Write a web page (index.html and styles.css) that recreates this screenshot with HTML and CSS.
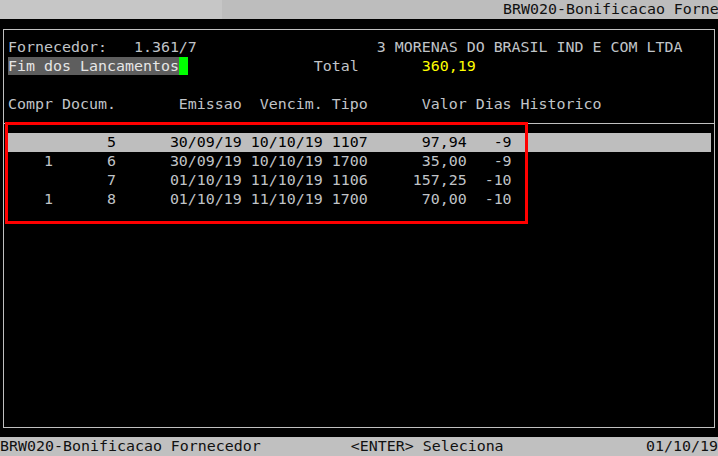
FILE: index.html
```html
<!DOCTYPE html>
<html lang="pt">
  <head>
    <meta charset="UTF-8" />
    <title>BRW020-Bonificacao Fornecedor</title>
    <link rel="stylesheet" href="styles.css">
  </head>
  <body>
    <!-- Title bar -->
    <div class="titlebar">
      <div class="titlebar-left"></div>
      <div class="titlebar-text">BRW020-Bonificacao Fornecedor</div>
    </div>

    <!-- Main frame -->
    <div class="frame">
      <div class="line">Fornecedor:   1.361/7                    3 MORENAS DO BRASIL IND E COM LTDA</div>
      <div class="line"><span class="field">Fim dos Lancamentos</span><span class="cursor"> </span>              Total       <span class="total">360,19</span></div>
      <div class="line"> </div>
      <div class="line">Compr Docum.       Emissao  Vencim. Tipo      Valor Dias Historico</div>
      <div class="sep"></div>

      <div class="row selected">           5      30/09/19 10/10/19 1107      97,94   -9</div>
      <div class="row">    1      6      30/09/19 10/10/19 1700      35,00   -9</div>
      <div class="row">           7      01/10/19 11/10/19 1106     157,25  -10</div>
      <div class="row">    1      8      01/10/19 11/10/19 1700      70,00  -10</div>

      <div class="mark"></div>
    </div>

    <!-- Status bar -->
    <div class="statusbar">
      <span>BRW020-Bonificacao Fornecedor          &lt;ENTER&gt; Seleciona</span>
      <span class="date">01/10/19</span>
    </div>
  </body>
</html>
```

FILE: styles.css
```css
body {
  margin: 0;
  background-color: #000;
  color: #c0c4c8;
  font-family: "DejaVu Sans Mono", "Liberation Mono", monospace;
  font-size: 14.95px;
  line-height: 19px;
  width: 718px;
  height: 456px;
  overflow: hidden;
}

.titlebar {
  height: 19px;
  background-color: #bdbdbd;
  color: #111;
  display: flex;
  overflow: hidden;
  white-space: pre;
}

.titlebar-left {
  flex-shrink: 0;
  width: 222px;
  background-color: #c6c6c6;
}

.titlebar-text {
  flex-shrink: 0;
  margin-left: 281px;
}

.frame {
  position: relative;
  box-sizing: border-box;
  margin: 10px 0 0 3px;
  width: 712px;
  height: 399px;
  border: 1px solid #c0c0c0;
  padding-top: 8px;
}

.line,
.row {
  white-space: pre;
  height: 19px;
  margin: 0 3px 0 4px;
}

.field {
  background-color: #5e5e5e;
  color: #e6e6e6;
}

.cursor {
  background-color: #00ff00;
}

.total {
  color: #ffff00;
}

.sep {
  height: 9px;
  border-bottom: 1px solid #c0c0c0;
  margin-bottom: 9px;
}

.selected {
  background-color: #bebebe;
  color: #000;
}

/* red annotation box drawn over the rows */
.mark {
  position: absolute;
  left: 1px;
  top: 92px;
  width: 523px;
  height: 102px;
  box-sizing: border-box;
  border: 3px solid #ff0000;
}

.statusbar {
  margin-top: 9px;
  height: 19px;
  background-color: #c0c0c0;
  color: #111;
  display: flex;
  white-space: pre;
}

.date {
  margin-left: auto;
}
```
